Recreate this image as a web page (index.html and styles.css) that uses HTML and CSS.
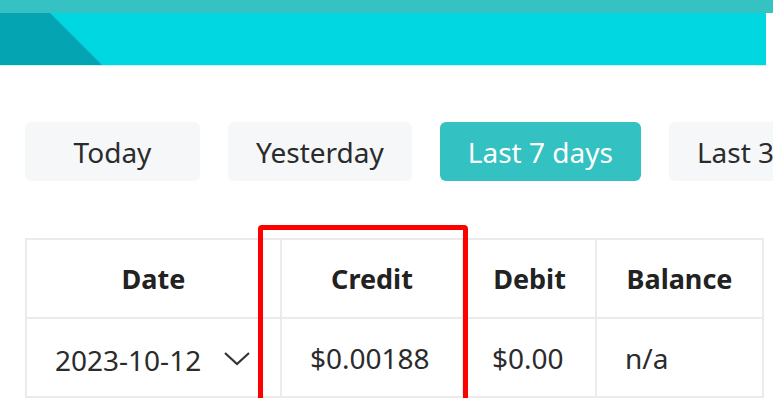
FILE: index.html
```html
<!DOCTYPE html>
<html lang="en">
<head>
  <meta charset="UTF-8" />
  <meta name="viewport" content="width=device-width, initial-scale=1.0"/>
  <title>Transactions</title>
  <link rel="stylesheet" href="styles.css">
</head>
<body>
  <header class="banner">
    <div class="strip"></div>
    <div class="band">
      <div class="corner"></div>
    </div>
  </header>

  <main class="content">
    <div class="ranges">
      <button class="range">Today</button>
      <button class="range">Yesterday</button>
      <button class="range active">Last 7 days</button>
      <button class="range">Last 30 days</button>
    </div>

    <div class="table-wrap">
      <table class="ledger">
        <colgroup>
          <col class="col-date">
          <col class="col-credit">
          <col class="col-debit">
          <col class="col-balance">
        </colgroup>
        <thead>
          <tr>
            <th>Date</th>
            <th>Credit</th>
            <th>Debit</th>
            <th>Balance</th>
          </tr>
        </thead>
        <tbody>
          <tr>
            <td>
              <span class="date">2023-10-12</span>
              <svg class="chevron" width="28" height="16" viewBox="0 0 28 16">
                <path d="M2 2 L14 13 L26 2" fill="none" stroke="#333" stroke-width="2.2"/>
              </svg>
            </td>
            <td>$0.00188</td>
            <td>$0.00</td>
            <td>n/a</td>
          </tr>
        </tbody>
      </table>
      <!-- highlight box drawn over the credit column -->
      <div class="highlight"></div>
    </div>
  </main>
</body>
</html>
```

FILE: styles.css
```css
body {
  margin: 0;
  font-family: "Noto Sans", "Open Sans", sans-serif;
  color: #2b2b2b;
  background: #fff;
  overflow: hidden;
}
.banner {
  height: 66px;
}
.strip {
  height: 13px;
  background: #36c1c3;
}
.band {
  height: 52px;
  margin-right: 7px;
  background: #00d7e0;
  border-bottom: 1px solid #c8f3f6;
  position: relative;
}
.corner {
  position: absolute;
  left: 0;
  top: 0;
  width: 102px;
  height: 52px;
  background: #04a4b2;
  clip-path: polygon(0 0, 50px 0, 102px 100%, 0 100%);
}
.content {
  padding-left: 25px;
}
.ranges {
  display: flex;
  gap: 28px;
  margin-top: 56px;
  white-space: nowrap;
  overflow: hidden;
}
.range {
  flex: none;
  min-width: 175px;
  height: 59px;
  padding: 0 28px;
  border: none;
  border-radius: 6px;
  background: #f6f7f9;
  font-family: inherit;
  font-size: 28px;
  color: #2b2b2b;
}
.range.active {
  background: #34c1c1;
  color: #fff;
}
.table-wrap {
  position: relative;
  margin-top: 57px;
}
.ledger {
  border-collapse: collapse;
  table-layout: fixed;
  width: 737px;
  font-size: 27px;
}
.col-date { width: 255px; }
.col-credit { width: 182px; }
.col-debit { width: 133px; }
.col-balance { width: 167px; }
.ledger th, .ledger td {
  border: 2px solid #ebebeb;
  padding: 0 0 0 28px;
  white-space: nowrap;
}
.ledger th {
  height: 77px;
  padding: 0;
  text-align: center;
  font-weight: bold;
  color: #222;
}
.ledger td {
  height: 77px;
  text-align: left;
  font-size: 28px;
}
.date {
  vertical-align: middle;
}
.chevron {
  vertical-align: middle;
  margin-left: 15px;
}
.highlight {
  position: absolute;
  left: 233px;
  top: -13px;
  width: 200px;
  height: 200px;
  border: 5px solid #ff0000;
  border-radius: 4px;
}
```
